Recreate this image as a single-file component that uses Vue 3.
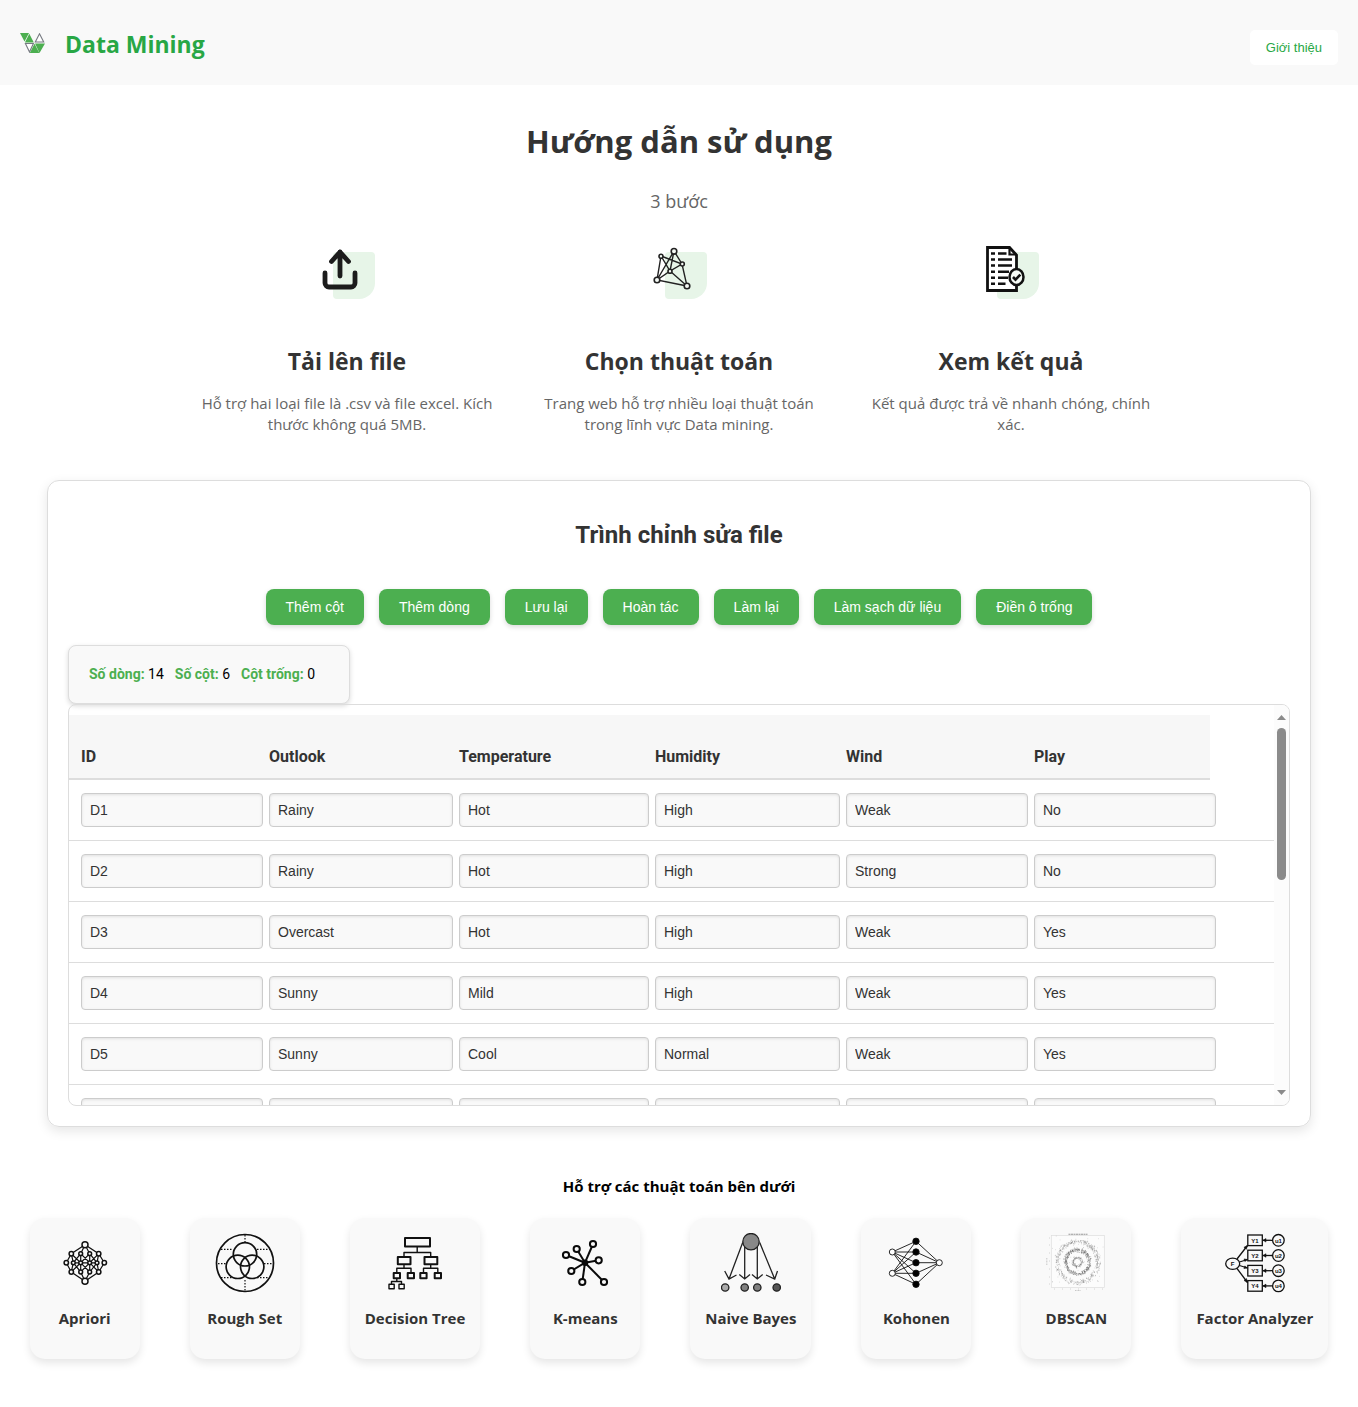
<script setup>
import { ref } from 'vue'

const steps = [
  { icon: 'upload', title: 'Tải lên file', text: 'Hỗ trợ hai loại file là .csv và file excel. Kích thước không quá 5MB.' },
  { icon: 'network', title: 'Chọn thuật toán', text: 'Trang web hỗ trợ nhiều loại thuật toán trong lĩnh vực Data mining.' },
  { icon: 'report', title: 'Xem kết quả', text: 'Kết quả được trả về nhanh chóng, chính xác.' },
]

const actions = ['Thêm cột', 'Thêm dòng', 'Lưu lại', 'Hoàn tác', 'Làm lại', 'Làm sạch dữ liệu', 'Điền ô trống']

const columns = ['ID', 'Outlook', 'Temperature', 'Humidity', 'Wind', 'Play']
const rows = ref([
  ['D1', 'Rainy', 'Hot', 'High', 'Weak', 'No'],
  ['D2', 'Rainy', 'Hot', 'High', 'Strong', 'No'],
  ['D3', 'Overcast', 'Hot', 'High', 'Weak', 'Yes'],
  ['D4', 'Sunny', 'Mild', 'High', 'Weak', 'Yes'],
  ['D5', 'Sunny', 'Cool', 'Normal', 'Weak', 'Yes'],
  ['D6', 'Sunny', 'Cool', 'Normal', 'Strong', 'No'],
])

const algorithms = ['Apriori', 'Rough Set', 'Decision Tree', 'K-means', 'Naive Bayes', 'Kohonen', 'DBSCAN', 'Factor Analyzer']

const aprioriNodes = [
  [30, 11.7, 3], [30, 48.3, 3], [11.3, 29.8, 2.2], [49.3, 29.8, 2.2],
  [16.3, 20.7, 2.2], [43.7, 20.7, 2.2], [16.3, 39, 2.2], [43.7, 39, 2.2],
  [25.7, 20.7, 1.9], [34.7, 20.7, 1.9], [25.7, 39, 1.9], [34.7, 39, 1.9],
  [18.3, 29.8, 1.9], [25.7, 29.8, 1.9], [34.7, 29.8, 1.9], [42, 29.8, 1.9],
]
const kmeansNodes = [[11, 22], [21.7, 16], [38, 11], [43.7, 27.3], [16.3, 38], [27.3, 49], [49, 49]]
const graphNodes = [[12, 14.3, 2], [25, 9.3, 2.8], [33.3, 22, 2], [21, 29.3, 2], [8, 38, 2.8], [38, 44, 2.8]]
const hiddenLayer = [8.3, 19, 29.7, 40.3, 51.3]

// Scatter of three noisy rings, seeded so that it is stable between renders
let seed = 7
const rand = () => (seed = (seed * 16807) % 2147483647) / 2147483647
const ring = (radius, spread, count) =>
  Array.from({ length: count }, () => {
    const a = rand() * Math.PI * 2
    const r = radius + (rand() + rand() - 1) * spread
    return `M${(31.3 + Math.cos(a) * r).toFixed(1)} ${(29 + Math.sin(a) * r).toFixed(1)}h.6`
  }).join('')
const noise = Array.from({ length: 60 }, () => `M${(6 + rand() * 51).toFixed(1)} ${(3 + rand() * 50).toFixed(1)}h.5`).join('')
const outerRing = ring(20.5, 3, 480)
const middleRing = ring(12, 2.4, 380)
const innerRing = ring(4.5, 1.8, 120)
</script>

<template>
  <div class="page">
    <header class="topbar">
      <div class="brand">
        <svg class="logo" viewBox="0 0 25 20" aria-hidden="true">
          <path d="M5.400 10.500h8L9.500 19z" fill="#fff" stroke="#777b82" stroke-width="1.100" />
          <path d="M19.500.8l4.200 8.200h-8.400z" fill="#fff" stroke="#777b82" stroke-width="1.100" />
          <path d="M0 0h9L4.500 8.500zM9.300.8l4.500 8.700H4.900zM19.500 20l-4.500-9.500H25zM14.500 10.800l4.800 9.200H9.800z" fill="#4caf50" />
        </svg>
        <span class="brand-name">Data Mining</span>
      </div>
      <button class="about" type="button">Giới thiệu</button>
    </header>

    <section class="guide">
      <h1>Hướng dẫn sử dụng</h1>
      <p class="lead">3 bước</p>
      <div class="steps">
        <article v-for="s in steps" :key="s.icon" class="step">
          <svg class="step-icon" viewBox="0 0 60 60" aria-hidden="true">
            <path d="M20 10H54a4 4 0 0 1 4 4V41a16 16 0 0 1-16 16H20a4 4 0 0 1-4-4V14a4 4 0 0 1 4-4z" fill="#e7f5e8" />
            <g v-if="s.icon === 'upload'" fill="none" stroke="#1c1c1c" stroke-width="4.800" stroke-linecap="round" stroke-linejoin="round">
              <path d="M23 10V34M14.500 19.500L23 10L31.500 19.500M8 31V41a4 4 0 0 0 4 4H34a4 4 0 0 0 4-4V31" />
            </g>
            <g v-else-if="s.icon === 'network'" fill="none" stroke="#222" stroke-width="1.400">
              <path d="M12 14L33 22L38 44L8 38L12 14L21 29L33 22L25 9L21 29L8 38L25 9M21 29L38 44M25 9L33 22" />
              <circle v-for="n in graphNodes" :key="n.join()" :cx="n[0]" :cy="n[1]" :r="n[2]" fill="#f5faf5" stroke-width="1.600" />
            </g>
            <g v-else fill="none" stroke="#111">
              <path d="M6.500 5.500H28.500L35.500 13V48.500H6.500z" fill="#fff" stroke-width="2.800" />
              <path d="M28.500 5.500V12.500H35.500" stroke-width="2.200" />
              <path d="M10 11.500h4M17 11.500h8.500M10 17.500h4M17 17.500h14M10 23.500h4M17 23.500h14M10 29.800h4M17 29.800h11M10 35.800h4M17 35.800h10M10 41.800h4M17 41.800h7.500" stroke-width="2.500" />
              <ellipse cx="35.500" cy="35" rx="7" ry="8" fill="#f5faf5" stroke-width="2.500" />
              <path d="M32 35l2.500 2.700 4.800-5" stroke-width="2.600" />
            </g>
          </svg>
          <h2>{{ s.title }}</h2>
          <p>{{ s.text }}</p>
        </article>
      </div>
    </section>

    <main class="editor">
      <h2>Trình chỉnh sửa file</h2>
      <div class="toolbar">
        <button v-for="a in actions" :key="a" type="button">{{ a }}</button>
      </div>
      <div class="summary">
        <span><b>Số dòng:</b> 14</span>
        <span><b>Số cột:</b> 6</span>
        <span><b>Cột trống:</b> 0</span>
      </div>
      <div class="grid">
        <div class="viewport">
          <table>
            <colgroup>
              <col class="c-id" /><col class="c-outlook" /><col class="c-temp" />
              <col class="c-humidity" /><col class="c-id" /><col class="c-id" /><col />
            </colgroup>
            <thead>
              <tr>
                <th v-for="c in columns" :key="c" scope="col">{{ c }}</th>
              </tr>
            </thead>
            <tbody>
              <tr v-for="(row, r) in rows" :key="r">
                <td v-for="(c, i) in columns" :key="c">
                  <input v-model="row[i]" type="text" :aria-label="`${c} ${r + 1}`" />
                </td>
                <td></td>
              </tr>
            </tbody>
          </table>
        </div>
        <div class="scrollbar" aria-hidden="true">
          <svg viewBox="0 0 9 5"><path d="M0 5L4.500 0L9 5z" /></svg>
          <span class="thumb"></span>
          <svg class="down" viewBox="0 0 9 5"><path d="M0 0H9L4.500 5z" /></svg>
        </div>
      </div>
    </main>

    <section class="algorithms">
      <h3>Hỗ trợ các thuật toán bên dưới</h3>
      <ul>
        <li v-for="name in algorithms" :key="name">
          <svg viewBox="0 0 60 60" aria-hidden="true">
            <g v-if="name === 'Apriori'" fill="none" stroke="#111" stroke-width="1.200">
              <path d="M30 11.700L16.300 20.700L11.300 29.800L16.300 39L30 48.300L43.700 39L49.300 29.800L43.700 20.700zM30 11.700L25.700 20.700M30 11.700L34.700 20.700M30 48.300L25.700 39M30 48.300L34.700 39M16.300 20.700L18.300 29.800L16.300 39M43.700 20.700L42 29.800L43.700 39M16.300 20.700L25.700 29.800L16.300 39M43.700 20.700L34.700 29.800L43.700 39M25.700 20.700L18.300 29.800L25.700 39L34.700 29.800zM34.700 20.700L42 29.800L34.700 39L25.700 29.800zM25.700 20.700V39M34.700 20.700V39M18.300 29.800H42" />
              <circle v-for="n in aprioriNodes" :key="n.join()" :cx="n[0]" :cy="n[1]" :r="n[2]" fill="#f9f9f9" stroke-width="1.500" />
            </g>
            <g v-else-if="name === 'Rough Set'" fill="none" stroke="#111" stroke-width="1.700">
              <circle cx="30" cy="30" r="28.500" />
              <circle cx="30" cy="21.300" r="11.700" />
              <circle cx="22.800" cy="33.800" r="11.700" />
              <circle cx="37.200" cy="33.800" r="11.700" />
              <path d="M30 2V9M30 47V58M6 16.300H18M42 16.300H55M3 30.700H11M49 30.700H58M6 44.700H18M42 44.700H55" stroke-dasharray="1.500 1.500" stroke-width="1.200" />
            </g>
            <g v-else-if="name === 'Decision Tree'" fill="none" stroke="#111" stroke-width="2" stroke-linejoin="round">
              <path d="M20 5H45V13.500H20zM12.800 24H25.500V31.300H12.800zM39.500 24H52.300V31.300H39.500zM8.700 40H15V45.300H8.700zM22.700 40H29V45.300H22.700zM35.300 40H41.600V45.300H35.300zM49.700 40H56V45.300H49.700z" />
              <path d="M32.200 14V19.500M19 23V19.500H45.700V23M19 31V35.300M11.800 39.500V35.300H26V39.500M45.700 31V35.300M38.500 39.500V35.300H52.800V39.500M11.800 45V48.500M6.500 51V48.500H16.500V51M4 51.300H9.200V55.700H4zM14 51.300H19.200V55.700H14z" stroke-width="1.400" />
            </g>
            <g v-else-if="name === 'K-means'" fill="#f9f9f9" stroke="#0a0a0a" stroke-width="2">
              <path v-for="n in kmeansNodes" :key="n.join()" :d="`M30 29.700L${n[0]} ${n[1]}`" />
              <circle v-for="n in kmeansNodes" :key="`c${n.join()}`" :cx="n[0]" :cy="n[1]" r="3.100" />
              <circle cx="30" cy="29.700" r="2.200" fill="#0a0a0a" />
            </g>
            <g v-else-if="name === 'Naive Bayes'" fill="none" stroke="#222" stroke-width="1.300">
              <circle cx="30" cy="8.700" r="8.200" fill="#888" />
              <path d="M21.700 9.500L8 46M23.700 14V46M36.300 14V46M38.700 9.500L53.700 46M3.700 38L8 46L15.500 42M18.300 41.500L23.700 46L29 41.500M31 41.500L36.300 46L41.700 41.500M45 42L53.700 46L56.500 38" />
              <circle cx="4.200" cy="54.500" r="3.700" fill="#aaa" />
              <circle cx="23.700" cy="54.500" r="3.700" fill="#808080" />
              <circle cx="36.300" cy="54.500" r="3.700" fill="#808080" />
              <circle cx="55.700" cy="54.500" r="3.700" fill="#555" />
            </g>
            <g v-else-if="name === 'Kohonen'" fill="none" stroke="#111" stroke-width=".9">
              <path v-for="y in hiddenLayer" :key="y" :d="`M6.300 19L30 ${y}L53.300 29.700M6.300 40.300L30 ${y}`" />
              <circle v-for="y in hiddenLayer" :key="`n${y}`" cx="30" :cy="y" r="3.200" fill="#000" />
              <g fill="#fff">
                <circle cx="6.300" cy="19" r="3" />
                <circle cx="6.300" cy="40.300" r="3" />
                <circle cx="53.300" cy="29.700" r="3" />
              </g>
            </g>
            <g v-else-if="name === 'DBSCAN'" fill="none" stroke="#555">
              <rect x="5.300" y="2.500" width="53" height="52" fill="#fcfcfc" stroke="#ddd" stroke-width=".7" />
              <path d="M22.500 1.200H41.500" stroke="#999" stroke-width="1.100" stroke-dasharray="2 .5" />
              <path d="M29 57.500h6M.8 25v7" stroke="#bbb" stroke-width=".8" stroke-dasharray="1 .5" />
              <path d="M8 56h1M16 56h1M24 56h1M32 56h1M40 56h1M48 56h1M56 56h1M3 5h1M3 12h1M3 20h1M3 28h1M3 36h1M3 44h1M3 51h1" stroke="#ccc" stroke-width=".8" />
              <path :d="noise" stroke-width=".5" opacity=".6" />
              <path :d="outerRing" stroke-width=".6" opacity=".6" />
              <path :d="middleRing" stroke-width=".7" opacity=".8" />
              <path :d="innerRing" stroke-width=".7" opacity=".6" />
            </g>
            <g v-else fill="none" stroke="#111" stroke-width="1.300">
              <ellipse cx="7.700" cy="30.700" rx="7" ry="5.600" />
              <path d="M12 26L22.500 12.500M14.500 29L22.500 26.500M14.500 32.500L22.500 35M12 35.500L22.500 49.500" />
              <path d="M22.500 12.500l-3.600 1.800 2.500 2zM22.500 26.500l-3.500-.6.900 2.700zM22.500 35l-2.700-2.100-.9 2.700zM22.500 49.500l-1-4-2.500 2z" fill="#111" stroke-width=".5" />
              <text x="7.700" y="33">F</text>
              <g v-for="(y, i) in [7.3, 22.5, 37.7, 52.9]" :key="y">
                <rect x="22.800" :y="y - 5.300" width="14.500" height="10.600" />
                <path :d="`M38 ${y}H47`" />
                <path :d="`M38 ${y}l3-1.800v3.600z`" fill="#111" stroke-width=".5" />
                <circle cx="53.400" :cy="y" r="5.800" />
                <text x="30" :y="y + 2.300">Y{{ i + 1 }}</text>
                <text x="53.400" :y="y + 2.300">u{{ i + 1 }}</text>
              </g>
            </g>
          </svg>
          <span>{{ name }}</span>
        </li>
      </ul>
    </section>
  </div>
</template>

<style>
body {
  margin: 0;
  background: #fff;
}
</style>

<style scoped>
* {
  box-sizing: border-box;
}
.page {
  font-family: "Open Sans", "Noto Sans", sans-serif;
  color: #333;
  padding-bottom: 48px;
}
h1, h2, h3, p, ul {
  margin: 0;
}
button {
  border: 0;
  font-family: "Liberation Sans", Arial, sans-serif;
  cursor: pointer;
}

.topbar {
  display: flex;
  justify-content: space-between;
  height: 85px;
  padding: 30px 20px 20px;
  background: #f9f9f9;
}
.brand {
  display: flex;
  gap: 20px;
  height: 30px;
}
.logo {
  width: 25px;
  height: 20px;
  margin-top: 3px;
}
.brand-name {
  font-size: 23px;
  font-weight: 700;
  line-height: 28px;
  color: #28a745;
}
.about {
  height: 35px;
  padding: 0 16px;
  border-radius: 5px;
  background: #fff;
  color: #28a745;
  font-size: 13px;
}

.guide {
  padding: 32px 20px 0;
  text-align: center;
}
.guide h1 {
  font-size: 31px;
  line-height: 48px;
}
.lead {
  margin-top: 24px;
  font-size: 18px;
  line-height: 24px;
  color: #666;
}
.steps {
  display: flex;
  justify-content: center;
  gap: 32px;
  margin-top: 29px;
}
.step {
  width: 300px;
}
.step-icon {
  display: block;
  width: 60px;
  height: 60px;
  margin: 0 auto 43px;
}
.step h2 {
  font-size: 23px;
  line-height: 32px;
}
.step p {
  margin-top: 16px;
  font-size: 15px;
  line-height: 21px;
  color: #666;
}

.editor {
  margin: 45px 47px 0;
  padding: 34px 20px 20px;
  border: 1px solid #ddd;
  border-radius: 12px;
  box-shadow: 0 4px 12px rgba(0, 0, 0, 0.1);
  font-family: Roboto, sans-serif;
}
.editor h2 {
  font-size: 24px;
  line-height: 40px;
  text-align: center;
}
.toolbar {
  display: flex;
  flex-wrap: wrap;
  justify-content: center;
  gap: 15px;
  margin: 34px 0 20px;
}
.toolbar button {
  height: 36px;
  padding: 0 20px;
  border-radius: 8px;
  background: #4caf50;
  box-shadow: 0 2px 5px rgba(0, 0, 0, 0.15);
  color: #fff;
  font-size: 14px;
}
.summary {
  display: flex;
  gap: 11px;
  width: 282px;
  height: 59px;
  padding: 0 20px;
  border: 1px solid #ddd;
  border-radius: 8px;
  background: #f9f9f9;
  box-shadow: 0 2px 5px rgba(0, 0, 0, 0.15);
  color: #000;
  font-size: 14px;
  line-height: 57px;
}
.summary b {
  color: #4caf50;
}
.grid {
  display: flex;
  height: 402px;
  overflow: hidden;
  border: 1px solid #ddd;
  border-radius: 8px;
}
.viewport {
  flex: 1;
  min-width: 0;
  padding-top: 10px;
  overflow: hidden;
}
table {
  width: 100%;
  table-layout: fixed;
  border-spacing: 0;
}
.c-id {
  width: 188px;
}
.c-outlook {
  width: 190px;
}
.c-temp {
  width: 196px;
}
.c-humidity {
  width: 191px;
}
th {
  height: 65px;
  padding: 20px 12px 0;
  border-bottom: 2px solid #ddd;
  background: #f7f7f7;
  font-size: 16px;
  text-align: left;
}
td {
  padding: 13px 12px;
  border-bottom: 1px solid #ddd;
}
td input {
  display: block;
  width: calc(100% + 18px);
  height: 34px;
  padding: 0 8px;
  border: 1px solid #ccc;
  border-radius: 4px;
  background: #f9f9f9;
  box-shadow: inset 0 1px 3px rgba(0, 0, 0, 0.1);
  color: #333;
  font-family: "Liberation Sans", Arial, sans-serif;
  font-size: 14px;
}
.scrollbar {
  display: flex;
  flex-direction: column;
  align-items: center;
  width: 15px;
  padding: 10px 0;
  background: #fcfcfc;
}
.scrollbar svg {
  width: 9px;
  height: 5px;
  fill: #8b8b8b;
}
.thumb {
  width: 9px;
  height: 152px;
  margin-top: 8px;
  border-radius: 5px;
  background: #8b8b8b;
}
.scrollbar .down {
  margin-top: auto;
}

.algorithms {
  padding: 47px 10px 0;
  text-align: center;
}
.algorithms h3 {
  color: #000;
  font-size: 15px;
  line-height: 24px;
}
.algorithms ul {
  display: flex;
  justify-content: center;
  gap: 50px;
  margin-top: 20px;
  padding: 0;
  list-style: none;
}
.algorithms li {
  min-width: 110px;
  height: 141px;
  padding: 15px 15px 0;
  border-radius: 15px;
  background: #f9f9f9;
  box-shadow: 0 4px 8px rgba(0, 0, 0, 0.1);
  font-size: 15px;
  font-weight: 700;
  line-height: 24px;
  white-space: nowrap;
}
.algorithms svg {
  display: block;
  width: 60px;
  height: 60px;
  margin: 0 auto 13px;
}
.algorithms text {
  fill: #111;
  stroke: none;
  font: 700 6px "Liberation Sans", Arial, sans-serif;
  text-anchor: middle;
}
</style>
